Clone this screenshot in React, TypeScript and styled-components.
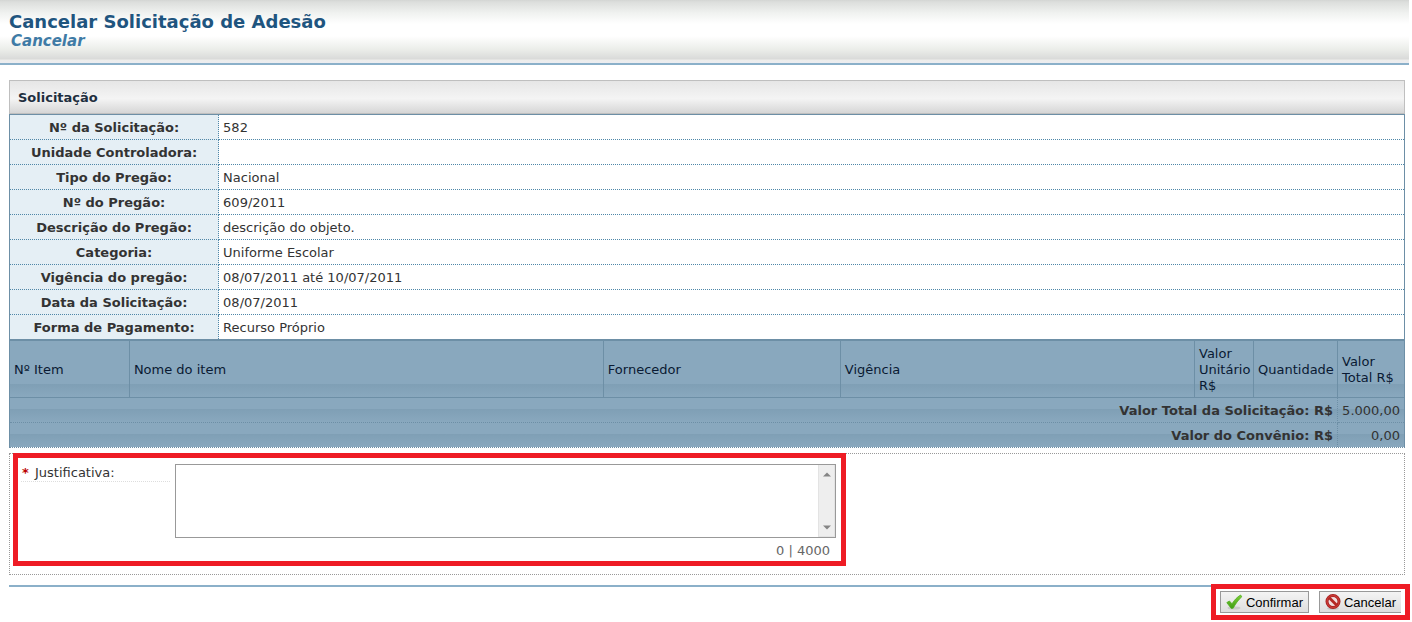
import React, { useState } from 'react';
import styled, { createGlobalStyle } from 'styled-components';

const GlobalStyle = createGlobalStyle`
  *, *::before, *::after { box-sizing: border-box; }
  body {
    margin: 0;
    background: #fff;
    color: #333;
    font-family: Verdana, "DejaVu Sans", sans-serif;
    font-size: 13px;
    line-height: 16px;
  }
`;

const Page = styled.div`
  padding-right: 3px;
`;

const Header = styled.header`
  height: 65px;
  padding: 12px 9px 0;
  border-bottom: 2px solid #8bb0c9;
  background: linear-gradient(
    #d3d5d3 0,
    #dcdedc 2px,
    #f0f2f0 13px,
    #ffffff 24px,
    #ffffff 36px,
    #eceeea 49px,
    #d9dad9 59px,
    #ededeb 60px,
    #ececf0 63px
  );
`;

const Title = styled.h1`
  margin: 0;
  color: #1f557f;
  font-size: 18px;
  line-height: 20px;
`;

const Subtitle = styled.p`
  margin: 0;
  padding-left: 2px;
  color: #3f7ba6;
  font-size: 15px;
  font-style: italic;
  font-weight: bold;
  line-height: 18px;
`;

const Main = styled.main`
  padding: 15px 4px 0 9px;
`;

const PanelTitle = styled.h2`
  margin: 0;
  padding: 9px 8px 7px;
  border: 1px solid #bfbfbf;
  color: #1f2f3f;
  background: linear-gradient(#e6e6e6, #f4f4f4 55%, #d6d6d6);
  font-size: 13px;
  line-height: 16px;
`;

const Table = styled.table`
  width: 100%;
  table-layout: fixed;
  border-collapse: separate;
  border-spacing: 0;
`;

const DetailsTable = styled(Table)`
  border: 1px solid #6d8fa6;
`;

const Col = styled.col<{ $width?: string }>`
  width: ${({ $width }) => $width ?? 'auto'};
`;

const DetailRow = styled.tr`
  &:not(:last-child) > * { border-bottom: 1px dotted #4f87a8; }
`;

const DetailLabel = styled.th`
  padding: 5px 4px 3px;
  border-right: 1px dotted #4f87a8;
  background: #e5eff5;
  text-align: center;
`;

const DetailValue = styled.td`
  padding: 5px 4px 3px;
`;

const ItemsTable = styled(Table)`
  border: 1px solid #6d8fa6;
  border-bottom-style: dotted;
`;

const band = `
  background: linear-gradient(
    #89a8be calc(100% - 13px),
    #7f9fb5 calc(100% - 13px),
    #89a8be
  );
`;

const ItemHeading = styled.th`
  ${band}
  padding: 5px 4px 3px;
  height: 57px;
  border-right: 1px solid #6d8fa6;
  border-bottom: 1px solid #6d8fa6;
  color: #0a1a33;
  font-weight: normal;
  text-align: left;
  &:last-child { border-right: 0; }
`;

const TotalRow = styled.tr`
  &:not(:last-child) > * { border-bottom: 1px dotted #6d8fa6; }
`;

const TotalLabel = styled.th`
  ${band}
  padding: 5px 4px 3px;
  border-right: 1px dotted #6d8fa6;
  text-align: right;
`;

const TotalValue = styled.td`
  ${band}
  padding: 5px 4px 3px;
  text-align: right;
`;

const Fieldset = styled.section`
  position: relative;
  display: flex;
  align-items: flex-start;
  height: 122px;
  margin-top: 5px;
  padding: 10px 11px;
  border: 1px dotted #999;
`;

const FieldLabel = styled.label`
  width: 149px;
  margin-right: 5px;
  padding-top: 1px;
  border-bottom: 1px dotted #ddd;
`;

const Required = styled.span`
  display: inline-block;
  width: 14px;
  padding-left: 1px;
  color: #b00;
  font-weight: bold;
`;

const Field = styled.div`
  width: 661px;
`;

const TextFrame = styled.div`
  display: flex;
  height: 74px;
  border: 1px solid #999;
`;

const TextArea = styled.textarea`
  flex: 1;
  min-width: 0;
  padding: 2px;
  border: 0;
  outline: 0;
  resize: none;
  background: #fff;
  font: inherit;
`;

const Rail = styled.div`
  display: flex;
  flex-direction: column;
  justify-content: space-between;
  align-items: center;
  width: 17px;
  padding: 7px 0 6px;
  border: 1px solid #e3e3e3;
  border-width: 0 1px 1px;
  background: #eee;
`;

const Counter = styled.output`
  display: block;
  padding: 5px 6px 0 0;
  color: #666;
  text-align: right;
`;

const Actions = styled.footer`
  position: relative;
  display: flex;
  justify-content: flex-end;
  gap: 10px;
  margin-top: 10px;
  padding: 4px 4px 9px 0;
  border-top: 2px solid #8bb0c9;
`;

const Button = styled.button<{ $openEnd?: boolean }>`
  display: flex;
  align-items: center;
  gap: 3px;
  height: 22px;
  padding: 0 5px;
  border: 1px solid #999;
  border-right-width: ${({ $openEnd }) => ($openEnd ? 0 : '1px')};
  color: #000;
  background: linear-gradient(#f4f4f4, #dedede);
  font-family: Arial, "Liberation Sans", sans-serif;
  font-size: 13px;
  white-space: nowrap;
`;

const Highlight = styled.div`
  position: absolute;
  border: 5px solid #ee1c25;
  pointer-events: none;
`;

const FieldHighlight = styled(Highlight)`
  top: -1px;
  left: 3px;
  width: 833px;
  height: 113px;
`;

const ActionsHighlight = styled(Highlight)`
  top: -3px;
  right: -5px;
  width: 199px;
  height: 36px;
`;

const CheckIcon = () => (
  <svg width="17" height="16" viewBox="0 0 17 16" aria-hidden="true">
    <defs>
      <linearGradient id="check" x1="0" y1="0" x2="0" y2="1">
        <stop offset="0" stopColor="#7fcf38" />
        <stop offset="1" stopColor="#3f9d14" />
      </linearGradient>
    </defs>
    <ellipse cx="8" cy="14" rx="6.500" ry="1.600" fill="#c9c9c9" />
    <path
      d="M.8 8.600 3.400 7 6 9.800C8.400 6 11 3.200 14.600 1L15.800 2.800C12.200 6 9.600 9.600 7.200 14.200L5.200 14.400Z"
      fill="url(#check)"
      stroke="#4fae20"
      strokeWidth=".8"
      strokeLinejoin="round"
    />
  </svg>
);

const ForbiddenIcon = () => (
  <svg width="16" height="16" viewBox="0 0 16 16" aria-hidden="true">
    <ellipse cx="8" cy="14.500" rx="6" ry="1.500" fill="#c9c9c9" />
    <circle cx="8" cy="7.500" r="6" fill="#f1dede" stroke="#a51d1d" strokeWidth="3" />
    <circle cx="8" cy="7.500" r="6" fill="none" stroke="#c93a36" strokeWidth="1.400" />
    <path d="M4 3.500 12 11.500" stroke="#b52724" strokeWidth="2.800" />
  </svg>
);

const Arrow = ({ down }: { down?: boolean }) => (
  <svg width="8" height="5" viewBox="0 0 8 5" aria-hidden="true">
    <path d={down ? 'M0 .5H8L4 4.500Z' : 'M0 4.500H8L4 .5Z'} fill="#858585" />
  </svg>
);

const details = [
  ['Nº da Solicitação:', '582'],
  ['Unidade Controladora:', ''],
  ['Tipo do Pregão:', 'Nacional'],
  ['Nº do Pregão:', '609/2011'],
  ['Descrição do Pregão:', 'descrição do objeto.'],
  ['Categoria:', 'Uniforme Escolar'],
  ['Vigência do pregão:', '08/07/2011 até 10/07/2011'],
  ['Data da Solicitação:', '08/07/2011'],
  ['Forma de Pagamento:', 'Recurso Próprio'],
];

const columns: { name: string; width?: string }[] = [
  { name: 'Nº Item', width: '8.6%' },
  { name: 'Nome do item', width: '34%' },
  { name: 'Fornecedor', width: '17%' },
  { name: 'Vigência' },
  { name: 'Valor Unitário R$', width: '59px' },
  { name: 'Quantidade', width: '84px' },
  { name: 'Valor Total R$', width: '66px' },
];

const totals = [
  ['Valor Total da Solicitação: R$', '5.000,00'],
  ['Valor do Convênio: R$', '0,00'],
];

export default function App() {
  const [reason, setReason] = useState('');

  return (
    <Page>
      <GlobalStyle />
      <Header>
        <Title>Cancelar Solicitação de Adesão</Title>
        <Subtitle>Cancelar</Subtitle>
      </Header>
      <Main>
        <PanelTitle>Solicitação</PanelTitle>
        <DetailsTable>
          <colgroup>
            <Col $width="15%" />
            <Col />
          </colgroup>
          <tbody>
            {details.map(([label, value]) => (
              <DetailRow key={label}>
                <DetailLabel scope="row">{label}</DetailLabel>
                <DetailValue>{value}</DetailValue>
              </DetailRow>
            ))}
          </tbody>
        </DetailsTable>
        <ItemsTable>
          <colgroup>
            {columns.map((c) => <Col key={c.name} $width={c.width} />)}
          </colgroup>
          <thead>
            <tr>
              {columns.map((c) => <ItemHeading key={c.name} scope="col">{c.name}</ItemHeading>)}
            </tr>
          </thead>
          <tbody>
            {totals.map(([label, value]) => (
              <TotalRow key={label}>
                <TotalLabel scope="row" colSpan={6}>{label}</TotalLabel>
                <TotalValue>{value}</TotalValue>
              </TotalRow>
            ))}
          </tbody>
        </ItemsTable>
        <Fieldset>
          <FieldLabel htmlFor="reason">
            <Required>*</Required>Justificativa:
          </FieldLabel>
          <Field>
            <TextFrame>
              <TextArea
                id="reason"
                maxLength={4000}
                value={reason}
                onChange={(e) => setReason(e.target.value)}
              />
              <Rail aria-hidden="true">
                <Arrow />
                <Arrow down />
              </Rail>
            </TextFrame>
            <Counter htmlFor="reason">{reason.length} | 4000</Counter>
          </Field>
          <FieldHighlight aria-hidden="true" />
        </Fieldset>
        <Actions>
          <Button type="button"><CheckIcon />Confirmar</Button>
          <Button type="button" $openEnd><ForbiddenIcon />Cancelar</Button>
          <ActionsHighlight aria-hidden="true" />
        </Actions>
      </Main>
    </Page>
  );
}
